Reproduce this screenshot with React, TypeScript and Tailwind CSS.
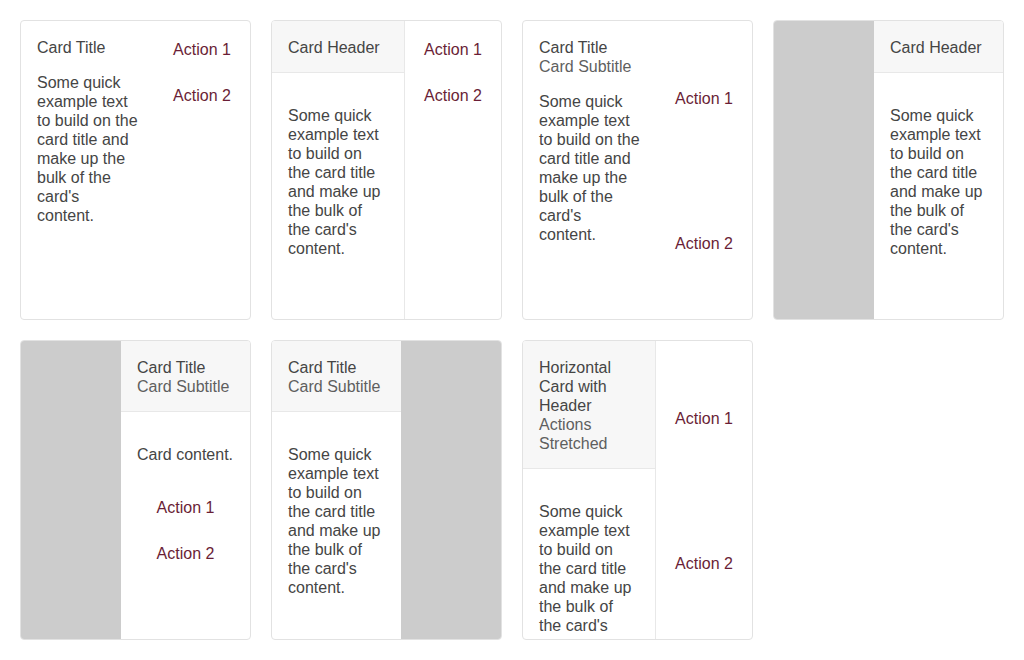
import React from 'react';

const body =
  "Some quick example text to build on the card title and make up the bulk of the card's content.";

const Card = ({ children }: { children: React.ReactNode }) => (
  <div className="flex h-[300px] overflow-hidden rounded border border-[#e2e2e2] bg-white">
    {children}
  </div>
);

const Action = ({ label }: { label: string }) => (
  <button className="flex h-9 items-center justify-center text-[#6a1e36]">{label}</button>
);

const Media = () => <div className="w-[100px] shrink-0 bg-[#cccccc]" />;

const Header = ({ children }: { children: React.ReactNode }) => (
  <div className="border-b border-[#e8e8e8] bg-[#f7f7f7] px-4 pb-[15px] pt-[17px]">{children}</div>
);

const Sub = ({ children }: { children: React.ReactNode }) => (
  <div className="text-[#5f5f5f]">{children}</div>
);

export default function App() {
  return (
    <div
      className="grid grid-cols-4 gap-5 p-5 text-[16px] leading-[19px] text-[#454545]"
      style={{ fontFamily: '"Liberation Sans", Arial, sans-serif' }}
    >
      {/* 1 */}
      <Card>
        <div className="w-[133px] shrink-0 px-4 pt-[17px]">
          <div>Card Title</div>
          <p className="mt-4">{body}</p>
        </div>
        <div className="flex w-[96px] flex-col items-center gap-[10px] pt-[10px]">
          <Action label="Action 1" />
          <Action label="Action 2" />
        </div>
      </Card>

      {/* 2 */}
      <Card>
        <div className="w-[132px] shrink-0">
          <Header>Card Header</Header>
          <p className="px-4 pt-[33px]">{body}</p>
        </div>
        <div className="flex w-[97px] flex-col items-center gap-[10px] border-l border-[#e8e8e8] pt-[10px]">
          <Action label="Action 1" />
          <Action label="Action 2" />
        </div>
      </Card>

      {/* 3 */}
      <Card>
        <div className="w-[133px] shrink-0 px-4 pt-[17px]">
          <div>Card Title</div>
          <Sub>Card Subtitle</Sub>
          <p className="mt-4">{body}</p>
        </div>
        <div className="flex w-[96px] flex-col items-center gap-[109px] pt-[59px]">
          <Action label="Action 1" />
          <Action label="Action 2" />
        </div>
      </Card>

      {/* 4 */}
      <Card>
        <Media />
        <div className="flex-1">
          <Header>Card Header</Header>
          <p className="px-4 pt-[33px]">{body}</p>
        </div>
      </Card>

      {/* 5 */}
      <Card>
        <Media />
        <div className="flex-1">
          <Header>
            <div>Card Title</div>
            <Sub>Card Subtitle</Sub>
          </Header>
          <p className="px-4 pb-[15px] pt-[33px]">Card content.</p>
          <div className="flex flex-col items-center gap-[10px] pt-[10px]">
            <Action label="Action 1" />
            <Action label="Action 2" />
          </div>
        </div>
      </Card>

      {/* 6 */}
      <Card>
        <div className="w-[129px] shrink-0">
          <Header>
            <div>Card Title</div>
            <Sub>Card Subtitle</Sub>
          </Header>
          <p className="px-4 pt-[33px]">{body}</p>
        </div>
        <Media />
      </Card>

      {/* 7 */}
      <Card>
        <div className="w-[132px] shrink-0">
          <Header>
            <div>Horizontal Card with Header</div>
            <Sub>Actions Stretched</Sub>
          </Header>
          <p className="px-4 pt-[33px]">{body}</p>
        </div>
        <div className="flex w-[97px] flex-col items-center gap-[109px] border-l border-[#e8e8e8] pt-[59px]">
          <Action label="Action 1" />
          <Action label="Action 2" />
        </div>
      </Card>
    </div>
  );
}
